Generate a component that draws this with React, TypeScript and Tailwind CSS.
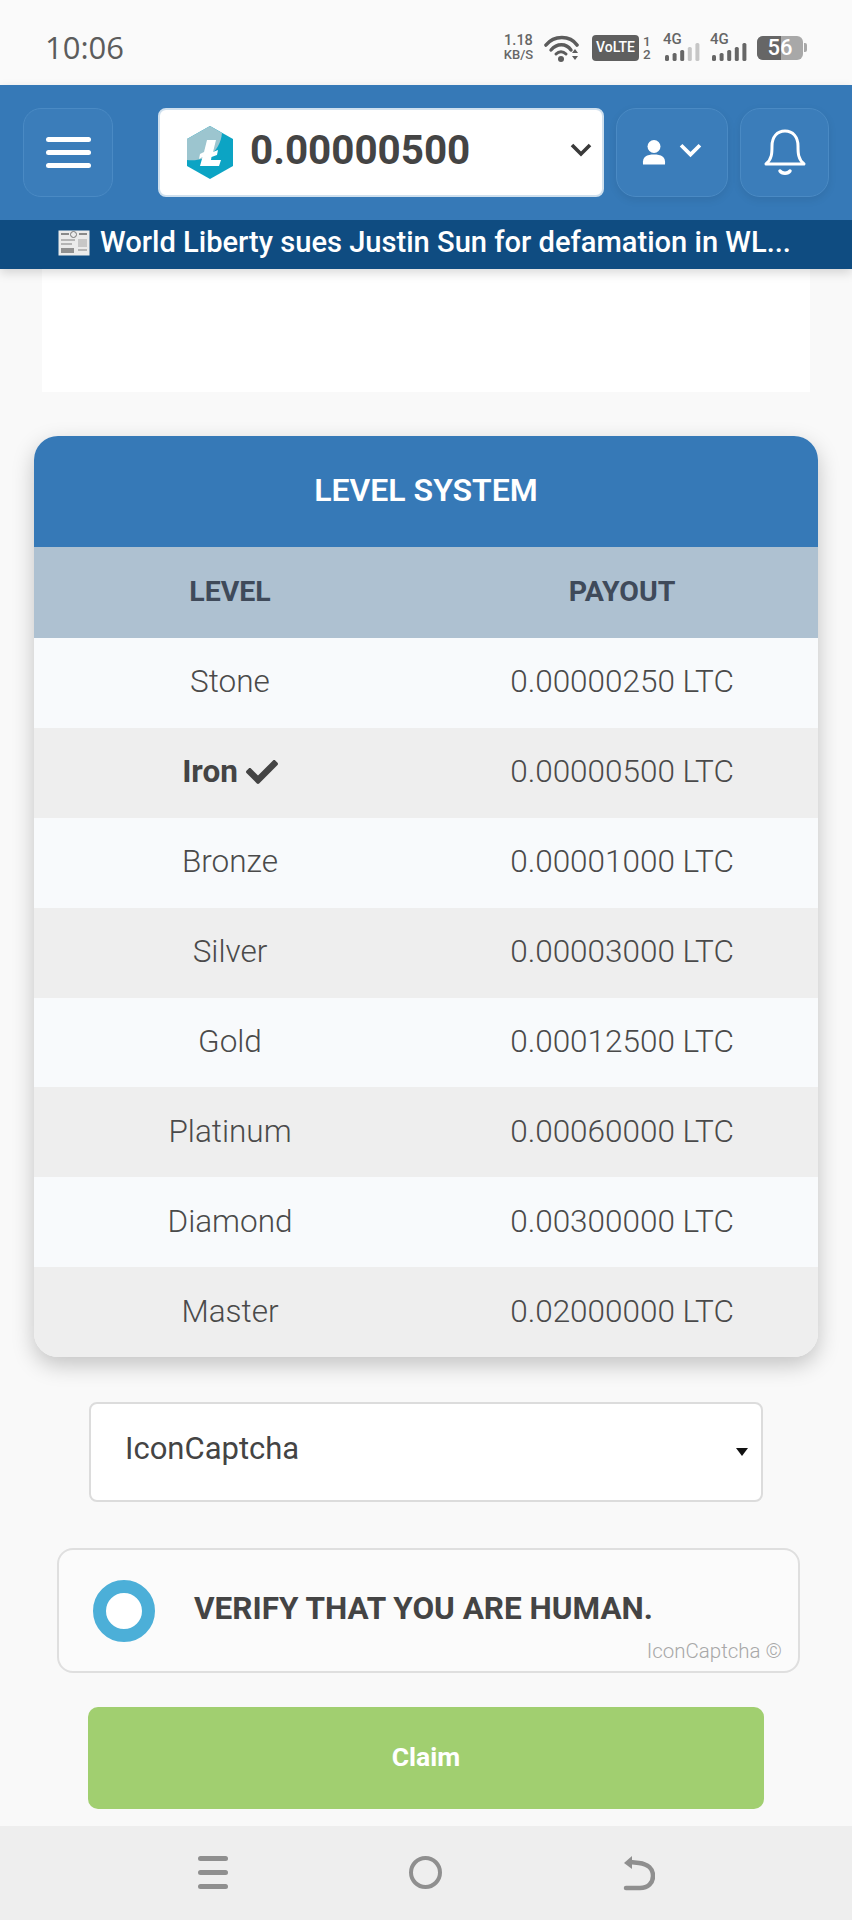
import { FaCheck } from "react-icons/fa";

const rows = [
  ["Stone", "0.00000250 LTC"],
  ["Iron", "0.00000500 LTC"],
  ["Bronze", "0.00001000 LTC"],
  ["Silver", "0.00003000 LTC"],
  ["Gold", "0.00012500 LTC"],
  ["Platinum", "0.00060000 LTC"],
  ["Diamond", "0.00300000 LTC"],
  ["Master", "0.02000000 LTC"],
];

function Signal({ filled }: { filled: number }) {
  const heights = [6, 8, 11, 14, 18];
  return (
    <div className="w-[35px] h-[27px] relative">
      <span className="absolute left-0 top-[-2px] text-[15px] leading-[15px] font-medium text-[#666]">4G</span>
      <svg width="35" height="18" viewBox="0 0 35 18" className="absolute left-[2px] top-[9px]">
        {heights.map((h, i) => (
          <rect key={i} x={i * 7.6} y={18 - h} width="4" height={h} rx="1.6" fill={i < filled ? "#666" : "#c6c6c6"} />
        ))}
      </svg>
    </div>
  );
}

function Row({ name, pay, even }: { name: string; pay: string; even: boolean }) {
  const iron = name === "Iron";
  return (
    <div className={`grid grid-cols-2 h-[89.9px] items-center text-center text-[31.5px] font-light text-[#4a4a4a] pb-[2px] ${even ? "bg-[#eeeeee]" : "bg-[#f8fafc]"}`}>
      <div className={`flex items-center justify-center gap-[8px] ${iron ? "font-bold text-[#444]" : ""}`}>
        <span>{name}</span>
        {iron && <FaCheck size={32} color="#444" />}
      </div>
      <div>{pay}</div>
    </div>
  );
}

export default function App() {
  return (
    <div className="w-[852px] h-[1920px] bg-[#f9f9f9] flex flex-col overflow-hidden font-['Roboto',sans-serif]">
      <div className="h-[85px] flex items-center justify-between pl-[45px] pr-[45px] pt-[10px] bg-[#fafafa] shrink-0">
        <span className="text-[31px] text-[#5c5c5c] font-['Open_Sans',sans-serif] leading-none">10:06</span>
        <div className="flex items-center">
          <div className="flex flex-col items-center text-[14.5px] leading-[14px] font-medium text-[#666] w-[31px]">
            <span>1.18</span>
            <span className="text-[13px]">KB/S</span>
          </div>
          <svg width="36" height="28" viewBox="0 0 36 28" className="ml-[10px]">
            <path d="M2 11 C10 1 26 1 33 11" fill="none" stroke="#5c5c5c" strokeWidth="3.6" strokeLinecap="round" />
            <path d="M7 16 C13 9 22 9 27 16" fill="none" stroke="#5c5c5c" strokeWidth="3.4" strokeLinecap="round" />
            <path d="M12 20 C15 17 19 17 22 20" fill="none" stroke="#5c5c5c" strokeWidth="3" strokeLinecap="round" />
            <circle cx="17" cy="25" r="3" fill="#5c5c5c" />
            <path d="M28 19 L34 19 L31 15 Z M28 22 L34 22 L31 26 Z" fill="#5c5c5c" />
          </svg>
          <div className="ml-[12px] w-[47px] h-[26px] rounded-[4px] bg-[#5f5f5f] text-white text-[14px] font-medium flex items-center justify-center">VoLTE</div>
          <div className="ml-[4px] flex flex-col text-[13.5px] leading-[13px] text-[#666] font-medium w-[8px]">
            <span>1</span>
            <span>2</span>
          </div>
          <div className="ml-[12px]"><Signal filled={3} /></div>
          <div className="ml-[12px]"><Signal filled={5} /></div>
          <div className="ml-[12px] relative w-[46px] h-[24px] rounded-[6px] bg-[#a8a8a8] overflow-hidden flex items-center">
            <div className="absolute left-0 top-0 bottom-0 w-[24px] bg-[#666]"></div>
            <span className="relative w-full text-center text-[22px] font-medium text-white leading-none">56</span>
          </div>
          <div className="w-[3px] h-[9px] ml-[1px] rounded-r-[2px] bg-[#a8a8a8]"></div>
        </div>
      </div>

      <div className="shadow-[0_4px_10px_rgba(0,0,0,0.15)] shrink-0 relative z-10">
        <div className="h-[135px] bg-[#3679b7] flex items-center pl-[23px] pr-[23px]">
          <button className="w-[90px] h-[89px] rounded-[18px] border border-[#4a8ac4] bg-[#3b7dba] flex flex-col items-center justify-center gap-[8px]">
            <span className="block w-[45px] h-[5px] rounded-full bg-white"></span>
            <span className="block w-[45px] h-[5px] rounded-full bg-white"></span>
            <span className="block w-[45px] h-[5px] rounded-full bg-white"></span>
          </button>
          <div className="ml-[45px] w-[446px] h-[89px] rounded-[8px] bg-white border-2 border-[#cfe0ee] flex items-center pl-[26px] pr-[10px]">
            <svg width="48" height="54" viewBox="0 0 48 54" className="shrink-0">
              <path d="M24 0 L47 13 L47 40 L24 53 L1 40 L1 13 Z" fill="#0ca4c4" />
              <path d="M24 0 L1 13 L1 34 C 20 36 34 26 36 7 Z" fill="#9cc5cf" />
              <path d="M21 14 L30 14 L27 26 L32 24 L31 29 L25.5 31 L25 34 L35 34 L33 40 L14 40 L16.5 31 L13 33 L14 28 L18 26 Z" fill="#fff" />
            </svg>
            <span className="ml-[16px] mb-[2px] text-[40.4px] font-bold text-[#444] leading-none">0.00000500</span>
            <svg width="22" height="14" viewBox="0 0 22 14" className="ml-auto mb-[5px]">
              <path d="M2 2 L11 11 L20 2" fill="none" stroke="#3a3a3a" strokeWidth="3.6" />
            </svg>
          </div>
          <button className="ml-[12px] w-[112px] h-[89px] rounded-[20px] border border-[#4a8ac4] bg-[#3b7dba] flex items-center justify-center gap-[13px] shadow-[0_3px_8px_rgba(0,0,0,0.08)]">
            <svg width="24" height="27" viewBox="0 0 24 26">
              <circle cx="12" cy="7" r="6.5" fill="#fff" />
              <path d="M1 25 C0 17 5 15 12 15 C19 15 24 17 23 25 Z" fill="#fff" />
            </svg>
            <svg width="23" height="15" viewBox="0 0 22 14" className="mb-[4px]">
              <path d="M2 2 L11 11 L20 2" fill="none" stroke="#fff" strokeWidth="3.6" />
            </svg>
          </button>
          <button className="ml-[12px] w-[89px] h-[89px] rounded-[20px] border border-[#4a8ac4] bg-[#3b7dba] flex items-center justify-center shadow-[0_3px_8px_rgba(0,0,0,0.08)]">
            <svg width="44" height="48" viewBox="0 0 44 48">
              <path d="M3 35 C9 30 9 24 9 17 C9 8 14 2 22 2 C30 2 35 8 35 17 C35 24 35 30 41 35 Z" fill="none" stroke="#fff" strokeWidth="3" strokeLinejoin="round" />
              <path d="M17 42 C19 45 25 45 27 42" fill="none" stroke="#fff" strokeWidth="3.4" strokeLinecap="round" />
            </svg>
          </button>
        </div>
        <div className="h-[49px] bg-[#0f4c81] flex items-center pl-[58px] pr-[50px] pb-[4px] text-white text-[29.1px] font-medium leading-none">
          <svg width="32" height="26" viewBox="0 0 32 26" className="shrink-0">
            <rect x="0.5" y="0.5" width="31" height="25" fill="#ebebeb" />
            <rect x="3" y="3" width="8" height="2" fill="#8a8a8a" />
            <circle cx="15.5" cy="4.5" r="3" fill="none" stroke="#777" strokeWidth="1" />
            <rect x="21" y="3" width="8" height="2" fill="#8a8a8a" />
            <rect x="3" y="9" width="14" height="2" fill="#b5b5b5" />
            <rect x="3" y="13" width="11" height="2" fill="#b5b5b5" />
            <rect x="20" y="9" width="9" height="8" fill="#c7c7c7" />
            <rect x="3" y="18" width="13" height="5" fill="#909090" />
            <rect x="20" y="19" width="9" height="2" fill="#b5b5b5" />
          </svg>
          <span className="ml-[10px] whitespace-nowrap">World Liberty sues Justin Sun for defamation in WL...</span>
        </div>
      </div>

      <div className="mx-[42px] h-[123px] bg-white shrink-0"></div>

      <div className="mt-[44px] mx-[34px] rounded-[24px] overflow-hidden shadow-[0_8px_22px_rgba(0,0,0,0.22)] shrink-0">
        <div className="h-[111px] bg-[#3679b7] flex items-center justify-center text-white text-[32px] font-semibold pb-[4px]">LEVEL SYSTEM</div>
        <div className="grid grid-cols-2 h-[91px] items-center text-center bg-[#aec1d1] text-[#3f4a5a] text-[28.5px] font-bold">
          <div>LEVEL</div>
          <div>PAYOUT</div>
        </div>
        {rows.map((r, i) => (
          <Row key={r[0]} name={r[0]} pay={r[1]} even={i % 2 === 1} />
        ))}
      </div>

      <div className="mt-[45px] mx-[89px] h-[100px] bg-white border-2 border-[#dcdcdc] rounded-[8px] flex items-center pl-[34px] pr-[13px] shrink-0">
        <span className="text-[31px] text-[#444] pb-[6px]">IconCaptcha</span>
        <svg width="12" height="8" viewBox="0 0 12 8" className="ml-auto mb-[1px]">
          <path d="M0 0 L12 0 L6 8 Z" fill="#111" />
        </svg>
      </div>

      <div className="mt-[46px] ml-[57px] mr-[52px] h-[125px] border-2 border-[#dfdfdf] rounded-[16px] bg-[#fbfbfb] flex items-center pl-[34px] relative shrink-0">
        <div className="w-[62px] h-[62px] rounded-full border-[13px] border-[#4cafd8] bg-white"></div>
        <span className="ml-[39px] text-[31.5px] font-bold text-[#444] pb-[4px]">VERIFY THAT YOU ARE HUMAN.</span>
        <span className="absolute right-[16px] bottom-[10px] text-[20.5px] text-[#a8a8a8] leading-none font-light">IconCaptcha ©</span>
      </div>

      <button className="mt-[34px] mx-[88px] h-[102px] rounded-[10px] bg-[#a1cf70] text-white text-[26.5px] font-bold flex items-center justify-center pb-[2px] shrink-0">Claim</button>

      <div className="mt-[17px] flex-1 bg-[#eeeeee]">
        <div className="pt-[30px] grid grid-cols-3 mx-[106px]">
          <div className="flex justify-center">
            <div className="w-[30px] h-[33px] flex flex-col justify-between">
              <span className="block h-[5px] rounded-full bg-[#8f8f8f]"></span>
              <span className="block h-[5px] rounded-full bg-[#8f8f8f]"></span>
              <span className="block h-[5px] rounded-full bg-[#8f8f8f]"></span>
            </div>
          </div>
          <div className="flex justify-center">
            <div className="w-[33px] h-[33px] rounded-full border-[4.5px] border-[#8f8f8f]"></div>
          </div>
          <div className="flex justify-center">
            <svg width="32" height="35" viewBox="0 0 32 35">
              <path d="M1 7 L9 0 L9 13 Z" fill="#8f8f8f" />
              <path d="M7 6 L16 7 C25 8 30 13 30 20 C30 27 25 32 17 32 L3 32" fill="none" stroke="#8f8f8f" strokeWidth="4.5" strokeLinecap="round" />
            </svg>
          </div>
        </div>
      </div>
    </div>
  );
}
